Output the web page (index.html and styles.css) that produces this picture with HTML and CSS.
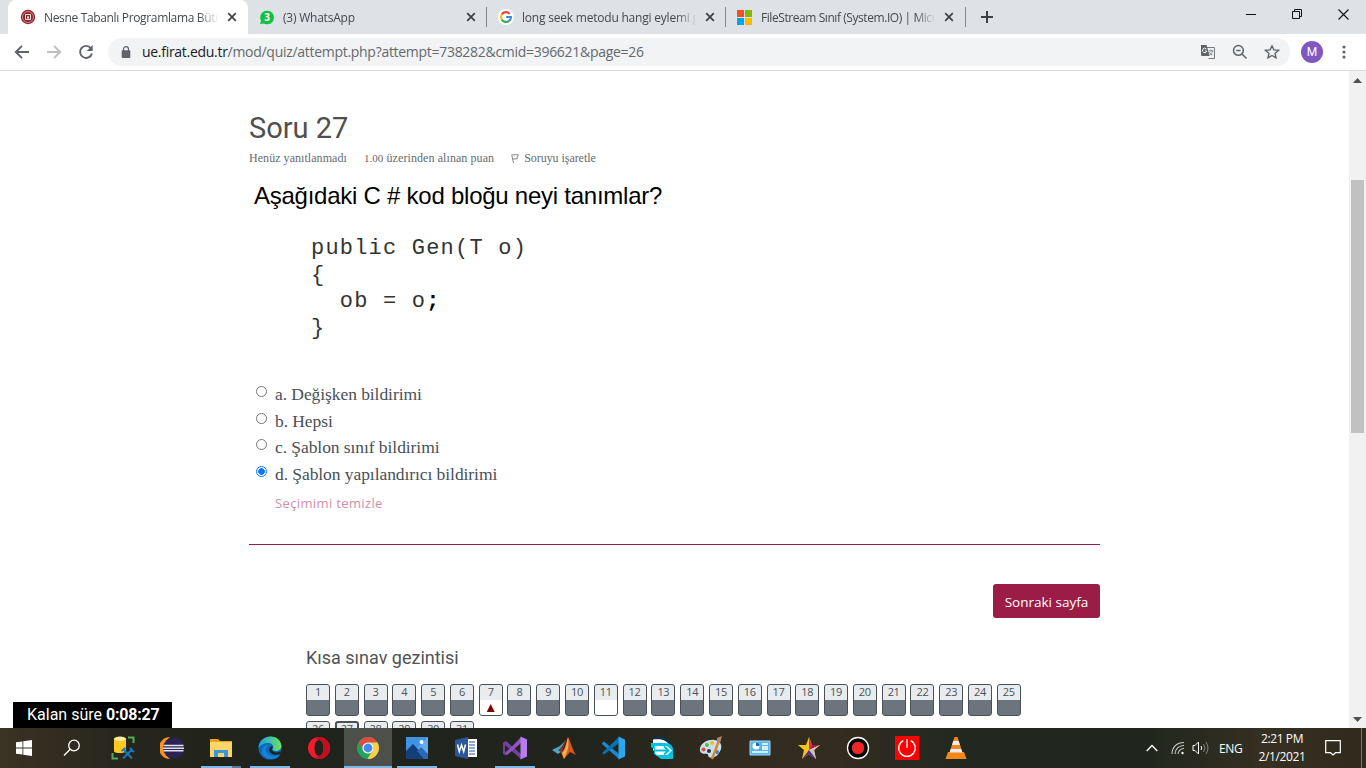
FILE: index.html
```html
<!DOCTYPE html>
<html lang="tr">
<head>
<meta charset="utf-8">
<title>Nesne Tabanlı Programlama Bütünleme</title>
<link rel="stylesheet" href="styles.css">
</head>
<body>
<header class="tabs">
  <div class="tab active">
    <svg class="fav" viewBox="0 0 16 16"><circle cx="8" cy="8" r="7.2" fill="#8f2229"/><circle cx="8" cy="8" r="5.5" fill="none" stroke="#d9a9ab" stroke-width=".8"/><path d="M5.5 5.5h5v5h-5z" fill="none" stroke="#f4e4e4"/><path d="M7 7.5h2v2H7z" fill="#fff"/></svg>
    <span class="title t1">Nesne Tabanlı Programlama Bütünleme</span>
    <svg class="x" viewBox="0 0 10 10"><path d="M1.2 1.2l7.6 7.6M8.8 1.2L1.2 8.8"/></svg>
  </div>
  <div class="tab">
    <svg class="fav" viewBox="0 0 16 16"><path d="M.5 15.7l1-4A7.3 7.3 0 1 1 4.7 15z" fill="#12c143" stroke="#f5f8f6" stroke-width=".7"/><text x="8" y="12" text-anchor="middle" class="badge">3</text></svg>
    <span class="title t2">(3) WhatsApp</span>
    <svg class="x" viewBox="0 0 10 10"><path d="M1.2 1.2l7.6 7.6M8.8 1.2L1.2 8.8"/></svg>
  </div>
  <div class="tab sep">
    <svg class="fav" viewBox="0 0 16 16"><circle cx="8" cy="8" r="8" fill="#fff"/><g fill="none" stroke-width="2.1"><path d="M11.6 4.7A5 5 0 0 0 3.7 5.5" stroke="#ea4335"/><path d="M3.7 5.5a5 5 0 0 0 0 5" stroke="#fbbc05"/><path d="M3.7 10.5a5 5 0 0 0 7.4 1.4" stroke="#34a853"/><path d="M11.1 11.9A5 5 0 0 0 13 8H8.2" stroke="#4285f4"/></g></svg>
    <span class="title t3">long seek metodu hangi eylemi gerçekleştirir</span>
    <svg class="x" viewBox="0 0 10 10"><path d="M1.2 1.2l7.6 7.6M8.8 1.2L1.2 8.8"/></svg>
  </div>
  <div class="tab sep">
    <svg class="fav" viewBox="0 0 16 16"><path d="M0 1h7v7H0z" fill="#f25022"/><path d="M8 1h7v7H8z" fill="#7fba00"/><path d="M0 9h7v7H0z" fill="#00a4ef"/><path d="M8 9h7v7H8z" fill="#ffb900"/></svg>
    <span class="title t4">FileStream Sınıf (System.IO) | Microsoft Docs</span>
    <svg class="x" viewBox="0 0 10 10"><path d="M1.2 1.2l7.6 7.6M8.8 1.2L1.2 8.8"/></svg>
  </div>
  <div class="newtab"><svg width="12" height="12" viewBox="0 0 12 12"><path d="M6 0v12M0 6h12" stroke="#3c4043" stroke-width="2"/></svg></div>
  <div class="window">
    <svg width="10" height="10"><path d="M0 5.5h10" stroke="#111"/></svg>
    <svg width="10" height="10" fill="none" stroke="#111"><path d="M.5 2.5h7v7h-7zM2.5 2.5v-2h7v7h-2"/></svg>
    <svg width="11" height="11"><path d="M.5.5l10 10M10.5.5l-10 10" stroke="#111" stroke-width="1.1"/></svg>
  </div>
</header>
<nav class="toolbar">
  <svg class="nav" viewBox="0 0 16 16"><path d="M15 8H2M8 1.8L1.8 8 8 14.2"/></svg>
  <svg class="nav fwd" viewBox="0 0 16 16"><path d="M1 8h13M8 1.8L14.2 8 8 14.2"/></svg>
  <svg class="nav" viewBox="0 0 16 16"><path d="M12.8 4.2a6 6 0 1 0 1.1 5.2"/><path d="M14.7 1v6h-6z" fill="#5f6368" stroke="none"/></svg>
  <div class="omnibox">
    <svg width="10" height="13" viewBox="0 0 10 13"><rect x=".7" y="4.3" width="8.600" height="7.700" rx="1" fill="#5f6368"/><path d="M2.500 5V3a2.500 2.300 0 0 1 5 0v2" fill="none" stroke="#5f6368" stroke-width="1.200"/></svg>
    <span class="url"><b>ue.firat.edu.tr</b>/mod/quiz/attempt.php?attempt=738282&amp;cmid=396621&amp;page=26</span>
    <div class="actions">
      <svg width="16" height="16" viewBox="0 0 16 16"><path d="M6 3.500h8.500v11H8.500" fill="none" stroke="#777b7f"/><path d="M1 1h5.500l3.200 11H2a1 1 0 0 1-1-1z" fill="#5f6368"/><path d="M6.300 5A2.200 2.200 0 1 0 6.800 7H5" fill="none" stroke="#fff"/><path d="M8.800 6.800h4.500M11 5.500v1.300M12.700 7c-.5 2-1.700 3.200-2.800 4M9.400 8.200c.7 1.500 1.600 2.200 3 3" fill="none" stroke="#777b7f" stroke-width=".9"/></svg>
      <svg width="16" height="16" viewBox="0 0 16 16" fill="none" stroke="#5f6368" stroke-width="1.5"><circle cx="6.400" cy="6.400" r="4.900"/><path d="M10 10l4.500 4.500M4.200 6.400h4.400"/></svg>
      <svg width="16" height="16" viewBox="0 0 16 16" fill="none" stroke="#5f6368" stroke-width="1.4"><path d="M8 1.800l1.900 4.100 4.500.5-3.400 3 1 4.400L8 11.500l-4 2.300 1-4.400-3.400-3 4.500-.5z"/></svg>
    </div>
  </div>
  <span class="avatar">M</span>
  <svg class="dots" width="4" height="14"><circle cx="2" cy="2" r="1.6"/><circle cx="2" cy="7" r="1.6"/><circle cx="2" cy="12" r="1.6"/></svg>
</nav>
<div class="view">
  <main class="page">
    <h1 class="heading"><span>Soru 27</span></h1>
    <div class="info">
      <span class="i1">Henüz yanıtlanmadı</span>
      <span class="i2"><small>1.00</small> üzerinden alınan puan</span>
      <span class="i3"><svg width="9" height="9" viewBox="0 0 9 9"><path d="M2.500 9L.7.800h7L6 3l.3 1.800-4.500.300" fill="none" stroke="#888"/></svg><span>Soruyu işaretle</span></span>
    </div>
    <h2 class="question"><span>Aşağıdaki C # kod bloğu neyi tanımlar?</span></h2>
    <pre class="code">public Gen(T o)
{
  ob = o<b>;</b>
}</pre>
    <div class="options">
      <label><i></i><span>a. Değişken bildirimi</span></label>
      <label><i></i><span>b. Hepsi</span></label>
      <label><i></i><span>c. Şablon sınıf bildirimi</span></label>
      <label><i class="on"></i><span>d. Şablon yapılandırıcı bildirimi</span></label>
    </div>
    <div class="clear"><span>Seçimimi temizle</span></div>
    <div class="rule"></div>
    <div class="submit"><button><span>Sonraki sayfa</span></button></div>
    <section class="quiznav">
      <h3><span>Kısa sınav gezintisi</span></h3>
      <div class="grid">
        <a>1</a><a>2</a><a>3</a><a>4</a><a>5</a><a>6</a><a class="flag">7</a><a>8</a><a>9</a><a>10</a><a class="open">11</a><a>12</a><a>13</a><a>14</a><a>15</a><a>16</a><a>17</a><a>18</a><a>19</a><a>20</a><a>21</a><a>22</a><a>23</a><a>24</a><a>25</a><a>26</a><a class="here">27</a><a>28</a><a>29</a><a>30</a><a>31</a>
      </div>
    </section>
  </main>
  <aside class="scroll"><svg width="9" height="5"><path d="M0 5l4.500-5L9 5z" fill="#505050"/></svg><div class="thumb"></div><svg width="9" height="5"><path d="M0 0l4.500 5L9 0z" fill="#505050"/></svg></aside>
  <div class="timer"><span>Kalan süre <b>0:08:27</b></span></div>
</div>
<footer class="taskbar">
  <div class="cell"><svg width="16" height="16" viewBox="0 0 16 16" fill="#fff"><path d="M0 2.3l6.500-.9v6.100H0zM7.300 1.300L16 0v7.500H7.300zM0 8.400h6.500v6.100L0 13.700zM7.300 8.400H16V16l-8.700-1.300z"/></svg></div>
  <div class="cell search"><svg width="18" height="18" viewBox="0 0 18 18" fill="none" stroke="#fff" stroke-width="1.3"><circle cx="11" cy="6.500" r="5.300"/><path d="M7.200 10.300L1 16.500"/></svg></div>
  <div class="cell"><svg viewBox="0 0 24 24"><path d="M3 2.500v13c2 2 9 2 12 0v-13z" fill="#ffc91f"/><ellipse cx="9" cy="2.800" rx="6" ry="2.200" fill="#ffe9a0"/><path d="M17 1.500h5.500V7M1.500 17v5.500H7" fill="none" stroke="#4caf50" stroke-width="2"/><path d="M13 14l8 8.500M21.500 13L12 22.500" stroke="#1976b8" stroke-width="2"/><path d="M10.500 15l4-3M19.500 11.500l.5 3.500 3.500.5" fill="none" stroke="#1976b8" stroke-width="1.800"/></svg></div>
  <div class="cell"><svg viewBox="0 0 24 24"><path d="M10 1a11 11 0 0 0 0 22A14 14 0 0 1 10 1z" fill="#f7941e"/><circle cx="13.500" cy="12" r="10.500" fill="#2c2255"/><path d="M3.500 9.500h20M3 12.200h21M3.500 14.700h20" stroke="#e2dff0" stroke-width="1.5"/></svg></div>
  <div class="cell run split"><svg viewBox="0 0 24 24"><path d="M1 3h8l2 2h12v16H1z" fill="#e8a51b"/><path d="M1 6h22v15H1z" fill="#ffd667"/><path d="M5 21v-7h14v7h-4v-4H9v4z" fill="#3996dc"/></svg></div>
  <div class="cell run"><svg viewBox="0 0 24 24"><defs><linearGradient id="edge"><stop stop-color="#1c9ee5"/><stop offset="1" stop-color="#6ce35e"/></linearGradient></defs><circle cx="12" cy="12" r="11.500" fill="#0b69bd"/><path d="M.5 12C1-2 22-4 23.500 10c0 6-9 6-9 3 2-2 0-6-4-6C6 7 2 9 .5 12z" fill="url(#edge)"/><path d="M14 10c-3-2-7 1-6 5 1 5 9 7 14 3-2 7-14 7-18-1 0-7 6-10 10-7z" fill="#1684d5"/><path d="M14 10c2 2-1 3 0 4 1 3 7 3 9 1l-1 3c-8 3-15-4-8-8z" fill="#20231c"/></svg></div>
  <div class="cell"><svg viewBox="0 0 24 24"><path d="M12 1a11 11 0 1 0 0 22 11 11 0 1 0 0-22zm0 3c3 0 4.500 4 4.500 8s-1.500 8-4.500 8-4.500-4-4.500-8S9 4 12 4z" fill="#f51b2d"/><path d="M14 1.200a11 11 0 0 1 0 21.600c-2 .4-4 0-5.500-2.300 1 .5 2.500.5 3.500-.5 3 0 4.500-4 4.500-8S15 4 12 4c-1-1-2.500-1-3.500-.5C10 1.200 12 .8 14 1.200z" fill="#c30d20"/></svg></div>
  <div class="cell run current"><svg viewBox="0 0 24 24"><circle cx="12" cy="12" r="11" fill="#20a55b"/><path d="M2.500 6.500A11 11 0 0 1 21.500 6.500H12a5.500 5.500 0 0 0-4.800 8.200z" fill="#df4b3e"/><path d="M21.500 6.500A11 11 0 0 1 11.300 23l5.500-8.500A5.500 5.500 0 0 0 12 6.500z" fill="#ffcd46"/><circle cx="12" cy="12" r="5.600" fill="#fff"/><circle cx="12" cy="12" r="4.400" fill="#4688f1"/></svg></div>
  <div class="cell run"><svg viewBox="0 0 24 24"><path d="M1 1h22v22H1z" fill="#4194e5"/><path d="M23 1v22L10 15z" fill="#65acef"/><path d="M1 15l7-7 14 15H1z" fill="#123f78"/><path d="M12 15l4-4 7 7v5h-4z" fill="#2969b6"/><circle cx="16.500" cy="6" r="2" fill="#fff"/></svg></div>
  <div class="cell"><svg viewBox="0 0 24 24"><path d="M12 3h11v18H12z" fill="#fff"/><path d="M15 6h6M15 9h6M15 12h6M15 15h6M15 18h6" stroke="#2b579a"/><path d="M1 4l13-3v22L1 20z" fill="#2b579a"/><path d="M3.500 8.500l1.800 7 2.200-6.500 2.200 6.500 1.800-7" fill="none" stroke="#fff" stroke-width="1.5"/></svg></div>
  <div class="cell run"><svg viewBox="0 0 24 24"><path d="M1 6l2-1 15 13v5L2 9v7l4-3v3l-4 3-2-1V7z" fill="#70419f"/><path d="M2 18L18 1v6L4 19z" fill="#9054c4"/><path d="M17.500.5L24 3.500v17l-6.500 3z" fill="#b77cf0"/></svg></div>
  <div class="cell"><svg viewBox="0 0 24 24"><path d="M0 14l8-4 5-5-3 10-4 3z" fill="#4fa3cc"/><path d="M16 1c3 5 4 12 8 18l-6-3-6 7-3-7c3 0 5-8 7-15z" fill="#d9551e"/><path d="M16 1c1 7 1 12-4 22l-2-6c3-2 4-7 6-16z" fill="#f9ae46"/><path d="M16 1c-3 5-4 11-7 15l-3-2c4-1 6-9 10-13z" fill="#792d24"/></svg></div>
  <div class="cell"><svg viewBox="0 0 24 24"><path d="M1 7l2-1.500 15 12.500v5L1 8z" fill="#168bd1"/><path d="M1 17L18 1v6L3 18.500z" fill="#0870b3"/><path d="M17.500.5L24 3.500v17l-6.500 3z" fill="#2aa8ef"/></svg></div>
  <div class="cell"><svg viewBox="0 0 24 24"><path d="M3 1c8-1 15 0 18 7v6H3z" fill="#10304a"/><path d="M3 3.500c7-1 13 0 16 5v6H3z" fill="#fff"/><path d="M1 7h14c5 0 8 3 8 6v10H11l-7-5v-5l-3-2z" fill="#00c4df"/><path d="M5 10h12l5 4.500-5 4.500H7l-2-2z" fill="#fff"/><path d="M5 14.500h13M14 10.500l4.500 4-4.500 4" fill="none" stroke="#00bddb" stroke-width="2"/></svg></div>
  <div class="cell"><svg viewBox="0 0 24 24"><path d="M1 15C0 8 8 3 16 4c7 1 8 8 4 13-4 6-11 6-11 2 0-3-6 1-8-4z" fill="#c7e3ef"/><circle cx="4.500" cy="13.500" r="2" fill="#d94a3a"/><circle cx="8" cy="9" r="2" fill="#69b348"/><circle cx="13" cy="7" r="2" fill="#f0b928"/><circle cx="10" cy="15" r="2" fill="#273039"/><circle cx="18" cy="16" r="2" fill="#3a81c6"/><path d="M21 2l-8 21" stroke="#dc8331" stroke-width="2.500"/><path d="M18 2l5-2-2 7-3-1z" fill="#b78565"/></svg></div>
  <div class="cell"><svg viewBox="0 0 24 24"><path d="M2 5h20v14H2z" fill="#58b5ea" stroke="#9bdcff"/><circle cx="8" cy="10" r="3.500" fill="#fff"/><path d="M8 10V6.500A3.500 3.500 0 0 1 11.500 10z" fill="#176bad"/><path d="M14 8h6M14 11h6M14 13h6M4 16h16" stroke="#fff" stroke-width="1.300"/></svg></div>
  <div class="cell"><svg viewBox="0 0 24 24"><path d="M12 1l3 8h8l-6 5 2 9-7-5-7 5 2-9-6-5h8z" fill="#f5c51c"/><path d="M12 1l3 8-3 5z" fill="#d22b62"/><path d="M12 14l3-5h8z" fill="#a91544"/><path d="M12 14l11-5-6 5 2 9z" fill="#c5c5cc"/><path d="M12 14l7 9-7-5-7 5z" fill="#5a279b"/></svg></div>
  <div class="cell"><svg viewBox="0 0 24 24"><circle cx="12" cy="12" r="10.500" fill="#000" stroke="#fff" stroke-width="1.300"/><circle cx="12" cy="12" r="6.200" fill="#ee2525"/></svg></div>
  <div class="cell"><svg viewBox="0 0 24 24"><path d="M0 0h24v24H0z" fill="#f00"/><path d="M8.300 4.600a8.300 8.300 0 1 0 7.400 0M12 3v9" fill="none" stroke="#fff" stroke-width="1.300"/></svg></div>
  <div class="cell"><svg viewBox="0 0 24 24"><path d="M4 16h16l2.500 7h-21z" fill="#f28a16"/><path d="M10.500 1h3L19 18q-7 4-14 0z" fill="#f2851c"/><path d="M9.300 5h5.400l1.200 4H8zM6.800 13h10.400l1.100 3.500H5.700z" fill="#eee"/></svg></div>
  <div class="tray">
    <svg width="12" height="8"><path d="M.7 7L6 1.500 11.300 7" fill="none" stroke="#fff" stroke-width="1.300"/></svg>
    <svg class="wifi" width="14" height="14" fill="none" stroke="#ccc" stroke-width="1.100"><path d="M1 13C1 6 6 1.500 13 1.500M4 13c0-5 4-8.500 9-8.500M7 13c0-3 3-5.500 6-5.500"/><circle cx="11.500" cy="12" r="1.200" fill="#fff" stroke="none"/></svg>
    <svg class="sound" width="17" height="14" fill="none" stroke="#fff"><path d="M1 4.500h2L6.500 1v12L3 9.500H1z"/><path d="M9 5q1.500 2 0 4"/><path d="M11.500 3q3 4 0 8M14 1q4 6 0 12" stroke="#85847e"/></svg>
    <span class="lang">ENG</span>
    <div class="clock"><span>2:21 PM</span><span>2/1/2021</span></div>
    <svg class="note" width="16" height="16"><path d="M.7.700h14.600v12H10.500L8 15l-2.500-2.300H.7z" fill="none" stroke="#fff" stroke-width="1.200"/></svg>
    <i class="peek"></i>
  </div>
</footer>
</body>
</html>
```
FILE: styles.css
```css
* { box-sizing: border-box; }
body { margin: 0; width: 1366px; height: 768px; overflow: hidden; display: flex; flex-direction: column; font-family: "Open Sans", sans-serif; background: #fff; }
svg { display: block; flex: none; }
h1, h2, h3, pre { margin: 0; font-weight: 400; }
.tabs { height: 34px; flex: none; display: flex; background: #dee1e6; padding-left: 8px; }
.tab { width: 239px; height: 34px; display: flex; align-items: center; padding: 0 11px 0 11px; color: #45494d; font-size: 12px; }
.tab.active { width: 240px; padding-left: 12px; background: #fff; border-radius: 8px 8px 0 0; }
.tab.sep { position: relative; }
.tab.sep::before { content: ""; position: absolute; left: -1px; top: 7px; width: 1px; height: 20px; background: #85888c; }
.fav { width: 16px; height: 16px; margin-right: 8px; }
.badge { font: 700 10px "Open Sans", sans-serif; fill: #fff; }
.title { flex: 1; min-width: 0; overflow: hidden; white-space: nowrap; letter-spacing: -.22px; -webkit-mask-image: linear-gradient(90deg, #000 88%, transparent); mask-image: linear-gradient(90deg, #000 88%, transparent); }
.t1 { letter-spacing: -.34px; }
.t3 { letter-spacing: -.21px; }
.t4 { letter-spacing: -.43px; }
.x { width: 10px; height: 10px; margin-left: 8px; fill: none; stroke: #3c4043; stroke-width: 1.7; }
.newtab { width: 44px; display: flex; align-items: center; justify-content: center; background: linear-gradient(#85888c, #85888c) no-repeat 0 7px / 1px 20px; }
.window { margin-left: auto; display: flex; gap: 36px; padding: 9px 17px 0 0; }
.toolbar { height: 37px; flex: none; display: flex; align-items: center; padding: 0 20px 0 14px; border-bottom: 1px solid #dadce0; }
.nav { width: 16px; height: 16px; margin-right: 16px; fill: none; stroke: #5f6368; stroke-width: 1.9; }
.nav.fwd { stroke: #bdbfc1; }
.omnibox { width: 1182px; height: 28px; margin-left: -2px; border-radius: 14px; background: #f1f3f4; display: flex; align-items: center; padding: 0 10px 0 13px; }
.url { margin-left: 11px; margin-top: -1px; font-size: 14px; letter-spacing: -.29px; color: #65696d; white-space: nowrap; }
.url b { font-weight: 400; color: #202124; }
.actions { display: flex; gap: 16px; margin-left: auto; }
.avatar { width: 22px; height: 22px; margin-left: 11px; border-radius: 50%; background: #7e57c2; color: #fff; font: 12px/22px Roboto, sans-serif; text-align: center; }
.dots { margin-left: auto; fill: #5f6368; }
.view { position: relative; height: 657px; flex: none; display: flex; overflow: hidden; }
.page { flex: 1; padding: 39px 249px 0 249px; }
.heading { height: 36px; font: 400 29px/36px Roboto, sans-serif; color: #4f4f4f; }
.info { display: flex; height: 16px; margin-top: 4px; font: 12px/16px "Liberation Serif", serif; color: #666b70; letter-spacing: .05px; white-space: nowrap; }
.info small { font-size: 11px; }
.i2 { margin-left: 17px; letter-spacing: .08px; }
.i3 { display: flex; align-items: center; gap: 4px; margin-left: 17px; letter-spacing: -.05px; }
.question { height: 28px; margin: 16px 0 0 5px; font: 24px/28px "Liberation Sans", sans-serif; letter-spacing: -.25px; color: #000; }
.code { margin: 26px 0 0 62px; height: 106px; font: 22px/26.7px "Liberation Mono", monospace; letter-spacing: 1.2px; color: #333; }
.code b { color: #000; }
.options { height: 107px; margin-top: 39px; color: #495057; font: 17.5px/26.7px "Liberation Serif", serif; }
.options label { display: flex; height: 26.7px; padding-left: 7px; }
.options i { width: 11px; height: 11px; margin: 5px 8px 0 0; border: 1px solid #777; border-radius: 50%; background: #fff; }
.options i.on { border-color: #0a75ff; background: radial-gradient(circle, #0a75ff 3px, #fff 3.6px); }
.options span { letter-spacing: -.07px; }
.clear { height: 26px; margin-top: 2px; padding-left: 26px; font-size: 13px; line-height: 26px; color: #d08fa8; letter-spacing: .37px; }
.rule { margin-top: 28px; height: 1px; background: #981e45; }
.submit { display: flex; justify-content: flex-end; margin-top: 39px; }
button { width: 107px; height: 34px; padding: 2px 0 0; border: 0; border-radius: 3px; background: #9b1d47; color: #fff; font: 13.5px "Open Sans", sans-serif; white-space: nowrap; }
.quiznav { padding-left: 57px; }
.quiznav h3 { margin-top: 28px; font: 18px/24px Roboto, sans-serif; color: #505457; }
.grid { display: grid; grid-template-columns: repeat(25, 24px); gap: 5px 4.79px; margin-top: 14px; }
.grid a { height: 32px; border: 1px solid #495057; border-radius: 3px; background: linear-gradient(#e9ecef 15px, #6c757d 15px); color: #495057; font-size: 11px; line-height: 14px; text-align: center; letter-spacing: -.3px; }
.grid .open, .grid .flag { background: linear-gradient(#e9ecef 15px, #fff 15px); }
.grid .flag::after { content: ""; display: block; margin: 5px auto 0; width: 8px; height: 8px; background: #800000; clip-path: polygon(50% 0, 100% 100%, 0 100%); }
.grid .here { border-width: 2px; line-height: 12px; }
.scroll { width: 17px; display: flex; flex-direction: column; align-items: center; padding: 7px 0 6px; background: #f1f1f1; }
.thumb { width: 13px; height: 253px; margin: 97px 0 auto; background: #c1c1c1; }
.timer { position: absolute; left: 13px; bottom: 0; width: 159px; height: 26px; background: #000; color: #fff; font: 16px/25px Roboto, sans-serif; padding-left: 14px; white-space: nowrap; }
.timer b { letter-spacing: -.2px; }
.taskbar { height: 40px; flex: none; display: flex; background: linear-gradient(90deg, #3b3223 0, #25251d 130px, #1e231b 330px, #22251d 600px, #332b1f 730px, #332c20 840px, #222820 960px, #20261d 1140px, #353022 1270px, #302a1d); }
.cell { position: relative; width: 48px; height: 40px; margin-right: 1px; display: flex; flex: none; align-items: center; justify-content: center; }
.cell:first-child { margin-right: 0; }
.cell.search { margin-right: 3px; }
.cell svg:not([width]) { width: 24px; height: 24px; }
.run::after { content: ""; position: absolute; bottom: 0; left: 4px; width: 40px; height: 2px; background: #76b9ed; }
.split::after { background: linear-gradient(90deg, #76b9ed 31px, #567c98 31px); }
.current::after { left: 0; width: 48px; }
.cell.current { background: #4d504a; }
.tray { margin-left: auto; display: flex; align-items: center; color: #fff; font-size: 12px; }
.wifi { margin-left: 13px; }
.sound { margin-left: 7px; }
.lang { width: 24px; margin-left: 10px; letter-spacing: -.4px; }
.clock { width: 50px; margin-left: 14px; display: flex; flex-direction: column; align-items: center; line-height: 18px; letter-spacing: -.4px; white-space: nowrap; }
.note { margin-left: 18px; }
.peek { width: 1px; height: 40px; margin: 0 4px 0 20px; background: #77756c; }
```
